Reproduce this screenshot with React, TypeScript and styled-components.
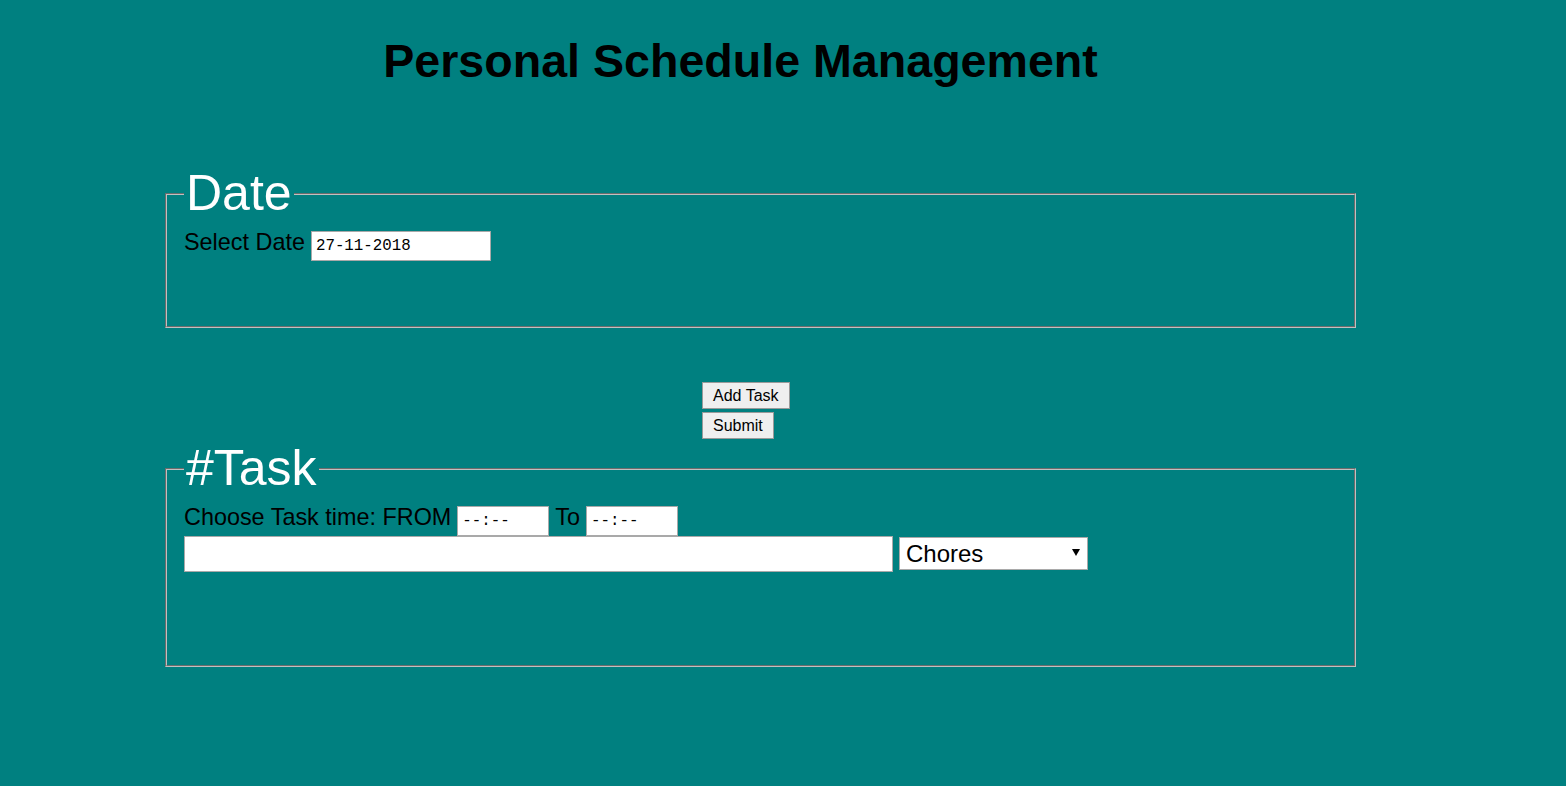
import React from "react";
import styled, { createGlobalStyle } from "styled-components";

const Global = createGlobalStyle`
  html, body {
    margin: 0;
    padding: 0;
    background: #008080;
  }
  body {
    font-family: "Liberation Sans", Arial, sans-serif;
    color: #000;
  }
  * { box-sizing: border-box; }
`;

const Page = styled.div`
  min-height: 786px;
  padding-top: 34px;
  background: #008080;
`;

const Title = styled.h1`
  margin: 0;
  padding-right: 85px;
  font-size: 46.6px;
  line-height: 54px;
  font-weight: bold;
  text-align: center;
  color: #000;
`;

const Section = styled.fieldset<{ $top: number; $bottom: number }>`
  margin: ${(p) => p.$top}px 0 0 165px;
  width: 1191px;
  padding: 8px 17px ${(p) => p.$bottom}px;
  border: 2px groove #c0c0c0;
  font-size: 23.4px;
  min-inline-size: 0;
`;

const Legend = styled.legend`
  padding: 0 2px;
  font-size: 50px;
  line-height: 55px;
  color: #fff;
`;

const Row = styled.div<{ $gap: number }>`
  display: flex;
  align-items: baseline;
  gap: ${(p) => p.$gap}px;
`;

const Label = styled.span`
  font-size: 23.4px;
  line-height: 27px;
  color: #000;
`;

const Field = styled.input<{ $w: number }>`
  width: ${(p) => p.$w}px;
  height: 30px;
  padding: 0 4px;
  background: #fff;
  border: 1px solid #a9a9a9;
  border-radius: 0;
  font-family: "Liberation Mono", "DejaVu Sans Mono", monospace;
  font-size: 15.8px;
  color: #000;
  outline: none;
`;

const Actions = styled.div`
  display: flex;
  flex-direction: column;
  align-items: flex-start;
  gap: 3px;
  margin: 54px 0 2px 702px;
`;

const Button = styled.button`
  height: 27px;
  padding: 0 10px;
  background: #efefef;
  border: 1px solid #9a9a9a;
  border-radius: 0;
  font-family: "Liberation Sans", Arial, sans-serif;
  font-size: 16px;
  line-height: 25px;
  color: #000;
`;

const EntryRow = styled.div`
  display: flex;
  align-items: center;
  gap: 6px;
`;

const TextBox = styled.input`
  width: 709px;
  height: 36px;
  padding: 0 4px;
  background: #fff;
  border: 1px solid #a9a9a9;
  border-radius: 0;
  font-family: "Liberation Sans", Arial, sans-serif;
  font-size: 24px;
  outline: none;
`;

const SelectWrap = styled.div`
  position: relative;
  width: 189px;
  height: 33px;
  margin-top: -1px;
`;

const Select = styled.select`
  appearance: none;
  -webkit-appearance: none;
  width: 100%;
  height: 100%;
  padding: 0 20px 0 6px;
  background: #fff;
  border: 1px solid #a9a9a9;
  border-radius: 0;
  font-family: "Liberation Sans", Arial, sans-serif;
  font-size: 24px;
  color: #000;
  outline: none;
`;

const Arrow = styled.span`
  position: absolute;
  right: 8px;
  top: 12px;
  width: 0;
  height: 0;
  border-left: 4px solid transparent;
  border-right: 4px solid transparent;
  border-top: 7px solid #000;
  pointer-events: none;
`;

export default function App() {
  return (
    <Page>
      <Global />
      <Title>Personal Schedule Management</Title>

      <Section $top={78} $bottom={65}>
        <Legend>Date</Legend>
        <Row $gap={6}>
          <Label>Select Date</Label>
          <Field $w={180} type="text" defaultValue="27-11-2018" aria-label="Select Date" />
        </Row>
      </Section>

      <Actions>
        <Button type="button">Add Task</Button>
        <Button type="button">Submit</Button>
      </Actions>

      <Section $top={0} $bottom={93}>
        <Legend>#Task</Legend>
        <Row $gap={6}>
          <Label>Choose Task time: FROM</Label>
          <Field $w={92} type="text" defaultValue="--:--" aria-label="From" />
          <Label>To</Label>
          <Field $w={92} type="text" defaultValue="--:--" aria-label="To" />
        </Row>
        <EntryRow>
          <TextBox type="text" aria-label="Task" />
          <SelectWrap>
            <Select defaultValue="Chores" aria-label="Category">
              <option>Chores</option>
              <option>Work</option>
              <option>Study</option>
              <option>Leisure</option>
            </Select>
            <Arrow />
          </SelectWrap>
        </EntryRow>
      </Section>
    </Page>
  );
}
